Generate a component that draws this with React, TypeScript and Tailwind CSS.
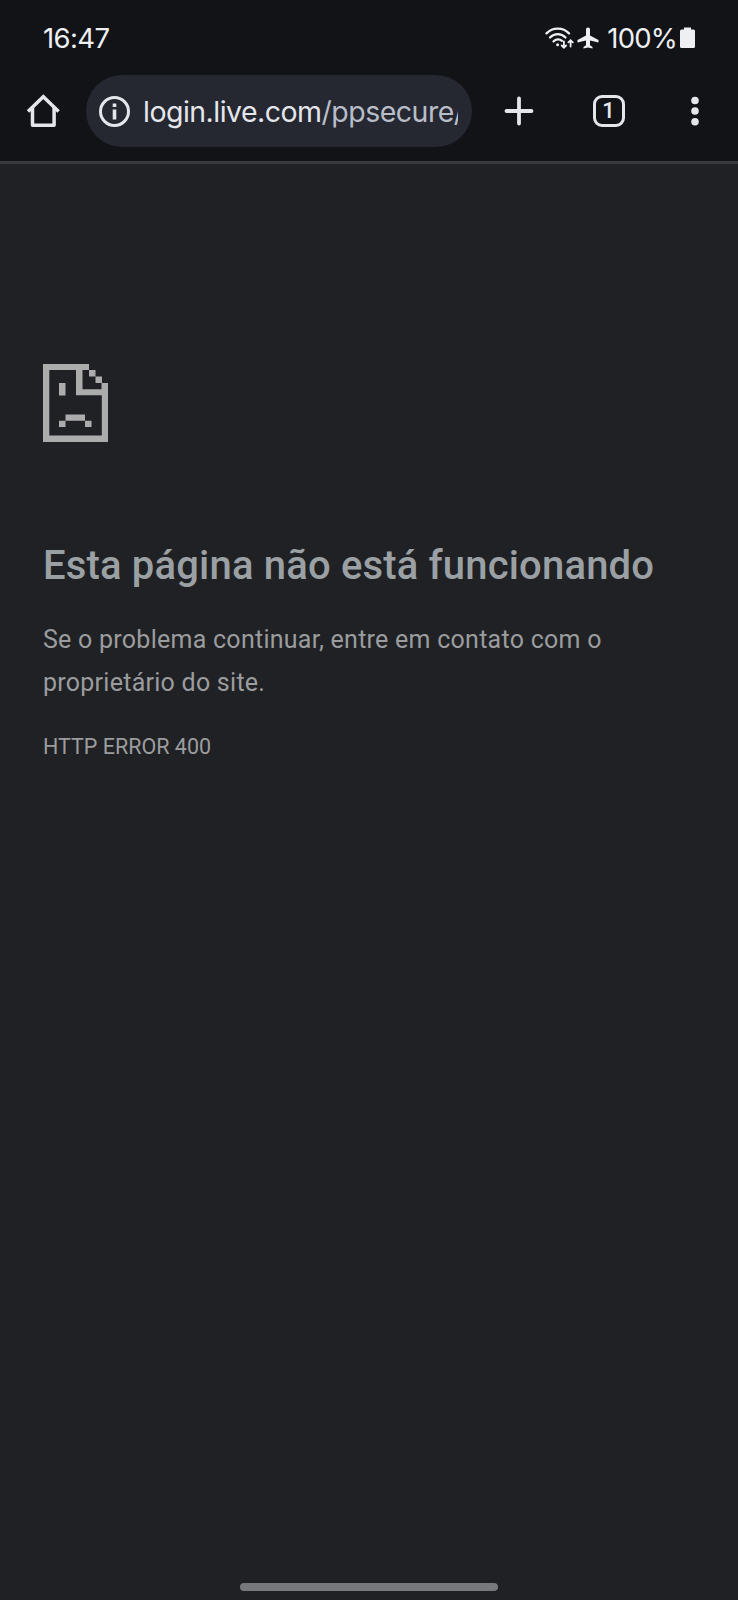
import type { ReactNode } from "react";

function StatusBar() {
  return (
    <div className="flex h-[75px] items-center justify-between pl-[43px] pr-[43px] pt-[2px] text-[27.500px] text-[#eeeff3]">
      <span className="tracking-[-0.600px]">16:47</span>
      <div className="flex items-center">
        {/* wifi with traffic arrows */}
        <svg className="mb-[2px]" width="30" height="24" viewBox="0 0 30 24" fill="none" stroke="currentColor" strokeWidth="2.300" strokeLinecap="round">
          <path d="M1.500 7.400C7.500 1 18 1 24 7.400" />
          <path d="M5 11.500C9.500 7 16 7 20.500 11.500" />
          <path d="M8.500 15.400c2.300-2.600 6-2.800 8.500-.6" />
          <circle cx="12.600" cy="18.700" r="1.500" fill="currentColor" stroke="none" />
          <path d="M18.900 15.500v6M16.700 19.500l2.200 2.200 2.200-2.200M25.600 20.500v-6M23.400 16.400l2.200-2.200 2.200 2.200" strokeWidth="1.800" />
        </svg>
        {/* airplane mode */}
        <svg className="mb-[2px] ml-[2px]" width="22" height="24" viewBox="0 0 22 24" fill="currentColor">
          <path d="M11 1.500c-1.200 0-2 .9-2 2.100v6L.5 14v2.500l8.500-1.900v4.600l-2.500 1.700v1.500l4.500-.9 4.500.9v-1.500L13 19.200v-4.600l8.500 1.900V14L13 9.600v-6c0-1.200-.8-2.100-2-2.100z" />
        </svg>
        <span className="ml-[8px] tracking-[-0.800px]">100%</span>
        <svg className="mb-[2px] ml-[3px]" width="15" height="24" viewBox="0 0 15 24" fill="currentColor">
          <path d="M4 1.500h7v2h2.500A1.500 1.500 0 0 1 15 5v15.500a1.500 1.500 0 0 1-1.500 1.500h-12A1.500 1.500 0 0 1 0 20.500V5a1.500 1.500 0 0 1 1.500-1.500H4z" />
        </svg>
      </div>
    </div>
  );
}

function IconButton({ label, className, children }: { label: string; className: string; children: ReactNode }) {
  return (
    <button type="button" aria-label={label} className={className}>
      {children}
    </button>
  );
}

function Toolbar() {
  return (
    <div className="flex h-[86px] items-start text-[#e4e6ec]">
      <IconButton label="Página inicial" className="ml-[26px] mt-[18px]">
        <svg width="34" height="36" viewBox="0 0 34 36" fill="none" stroke="currentColor" strokeWidth="3.500" strokeLinejoin="round">
          <path d="M2 18.500L17.300 3.800L32.600 18.500" strokeLinejoin="miter" />
          <path d="M6.500 15v17.200h21.600V15" />
        </svg>
      </IconButton>
      <div className="ml-[26px] flex h-[72px] w-[386px] items-center rounded-full bg-[#252831] pl-[13px] pr-[14px]">
        <svg className="shrink-0" width="31" height="31" viewBox="0 0 31 31" fill="none">
          <circle cx="15.500" cy="15.500" r="14" stroke="currentColor" strokeWidth="3" />
          <path d="M13.700 7.500h3.600v3.500h-3.600zM13.700 13.500h3.600v10h-3.600z" fill="currentColor" />
        </svg>
        <div className="ml-[13px] mt-[2px] flex-1 overflow-hidden whitespace-nowrap text-[28.500px] leading-[40px] tracking-[-0.520px]">
          login.live.com<span className="text-[#b9bdc8]">/ppsecure/</span>
        </div>
      </div>
      <IconButton label="Nova guia" className="ml-[32px] mt-[21px]">
        <svg width="30" height="30" viewBox="0 0 30 30" stroke="currentColor" strokeWidth="3.800" strokeLinecap="round">
          <path d="M15 2.500v25M2.500 15h25" />
        </svg>
      </IconButton>
      <IconButton
        label="Guias abertas"
        className="ml-[59px] mt-[20px] flex h-[32px] w-[32px] items-center justify-center rounded-[9px] border-[3px] border-current pr-[1px] font-['Roboto'] text-[22px] font-medium leading-none"
      >
        1
      </IconButton>
      <IconButton label="Menu" className="ml-[66px] mt-[20px]">
        <svg width="8" height="32" viewBox="0 0 8 32" fill="currentColor">
          <circle cx="4" cy="5.500" r="3.800" />
          <circle cx="4" cy="16" r="3.800" />
          <circle cx="4" cy="26.700" r="3.800" />
        </svg>
      </IconButton>
    </div>
  );
}

function SadPage() {
  return (
    <svg width="65" height="78" viewBox="0 0 65 78" fill="#acacac">
      <path d="M0 0h46v6H6.300v65.600h52.500V31.300H33V6h6.500v19.300h19V19H65v59H0z" />
      <path d="M46 6h6.500v6.500H46zM52.500 12.500H59V19h-6.500z" />
      <path d="M16 19h6.500v12.500H16zM22.500 50.500H42v6.200h6.500V63H42v-6.300H22.500V63H16v-6.300h6.500z" />
    </svg>
  );
}

export default function App() {
  return (
    <div className="flex h-[1600px] w-[738px] flex-col overflow-hidden bg-[#202124]">
      <header className="border-b-[3px] border-[#3a3b3e] bg-[#111317] font-['Inter',sans-serif]">
        <StatusBar />
        <Toolbar />
      </header>
      <main className="flex-1 px-[43px] pt-[200px] font-['Roboto',sans-serif] text-[#9aa0a3]">
        <SadPage />
        <h1 className="mt-[99px] whitespace-nowrap text-[40px] font-medium leading-[50px] tracking-[0.170px]">
          Esta página não está funcionando
        </h1>
        <p className="mt-[27px] text-[25px] leading-[43px] tracking-[0.260px] text-[#9b9c9e]">
          Se o problema continuar, entre em contato com o<br />
          proprietário do site.
        </p>
        <div className="mt-[22px] text-[21.500px] leading-[42px] text-[#9b9c9e]">HTTP ERROR 400</div>
      </main>
      <div className="mx-auto mb-[9px] h-[8px] w-[258px] rounded-full bg-[#77787b]" />
    </div>
  );
}
